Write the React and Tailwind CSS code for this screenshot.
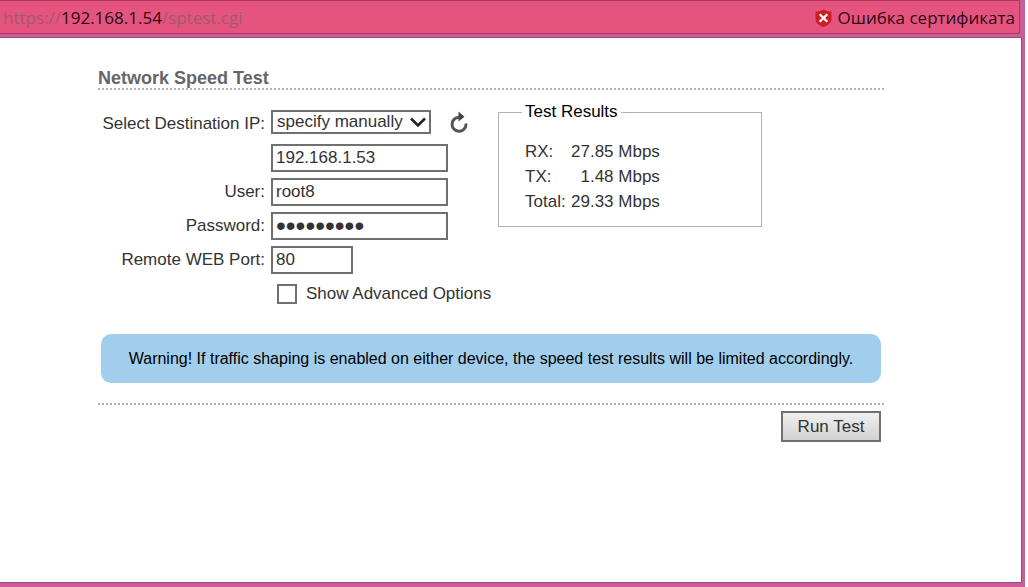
import { useState } from "react";

const results = [
  { label: "RX:", value: "27.85" },
  { label: "TX:", value: "1.48" },
  { label: "Total:", value: "29.33" },
];

const inputClass = "h-7 border-2 border-[#707070] bg-white px-[3px] outline-none";

function ShieldIcon() {
  return (
    <svg width="17" height="19" viewBox="0 0 17 19" aria-hidden="true">
      <path
        d="M8.500 .5 C11 2 13.500 2.600 16.500 2.600 V10 C16.500 14 12.500 16.500 8.500 18.300 C4.500 16.500 .5 14 .5 10 V2.600 C3.500 2.600 6 2 8.500 .5Z"
        fill="#cf1d25"
      />
      <path d="M4.700 5.200 L12.300 12.800 M12.300 5.200 L4.700 12.800" stroke="#fff" strokeWidth="2.200" />
    </svg>
  );
}

function ReloadIcon() {
  return (
    <svg width="20" height="24" viewBox="0 0 20 24" aria-hidden="true">
      <path d="M10 7.200 A7 7 0 1 0 17 13.500" fill="none" stroke="#555" strokeWidth="3" />
      <path d="M9.500 1.500 L15.500 6.800 L9.500 11.400Z" fill="#444" />
    </svg>
  );
}

function AddressBar() {
  return (
    <header className="mr-[5px] flex h-[34px] items-center justify-between border border-l-0 border-[#ab3560] bg-[#e5547f] pl-[3px] pr-1 font-['Open_Sans','Noto_Sans',sans-serif] text-[17px] text-[#2b0a14]">
      <p className="pt-[2px] text-[#a05a6c]">
        https://<span className="text-[#2b0a14]">192.168.1.54</span>/sptest.cgi
      </p>
      <p className="flex items-center gap-[6px] pt-[2px]">
        <ShieldIcon />
        Ошибка сертификата
      </p>
    </header>
  );
}

function SpeedTestForm() {
  const [advanced, setAdvanced] = useState(false);

  return (
    <div className="grid grid-cols-[167px_auto] items-center justify-items-start gap-[6px]">
      <label htmlFor="destination" className="justify-self-end">
        Select Destination IP:
      </label>
      <div className="flex h-7 items-start gap-[18px]">
        <div className="relative">
          <select
            id="destination"
            className="block h-6 w-40 appearance-none border-2 border-[#707070] bg-white pl-1 leading-5 outline-none"
          >
            <option>specify manually</option>
          </select>
          <svg
            className="pointer-events-none absolute right-[5px] top-[7px]"
            width="16"
            height="11"
            viewBox="0 0 16 11"
            aria-hidden="true"
          >
            <path d="M1 1.500 L8 8.500 L15 1.500" fill="none" stroke="#222" strokeWidth="2.600" />
          </svg>
        </div>
        <button type="button" aria-label="Refresh">
          <ReloadIcon />
        </button>
      </div>

      <input
        aria-label="Destination IP"
        className={`col-start-2 w-[177px] ${inputClass}`}
        defaultValue="192.168.1.53"
      />

      <label htmlFor="user" className="justify-self-end">
        User:
      </label>
      <input id="user" className={`w-[177px] ${inputClass}`} defaultValue="root8" />

      <label htmlFor="password" className="justify-self-end">
        Password:
      </label>
      <input
        id="password"
        type="password"
        className={`w-[177px] text-[28px] leading-6 ${inputClass}`}
        defaultValue="ubntubnt1"
      />

      <label htmlFor="port" className="justify-self-end">
        Remote WEB Port:
      </label>
      <input id="port" className={`w-[82px] ${inputClass}`} defaultValue="80" />

      <label className="col-start-2 flex h-7 items-center gap-[9px] pl-[6px]">
        <input
          type="checkbox"
          checked={advanced}
          onChange={(e) => setAdvanced(e.target.checked)}
          className="size-5 appearance-none border-2 border-[#707070] bg-white checked:bg-[#707070]"
        />
        Show Advanced Options
      </label>
    </div>
  );
}

function TestResults() {
  return (
    <fieldset className="w-[264px] border border-[#b0b0b0] pb-3 pl-[23px]">
      <legend className="px-[3px] leading-5 text-black">Test Results</legend>
      <table className="ml-[3px] mt-[17px]">
        <tbody>
          {results.map((row) => (
            <tr key={row.label} className="h-[25px]">
              <th className="w-[46px] text-left font-normal">{row.label}</th>
              <td className="text-right">{row.value} Mbps</td>
            </tr>
          ))}
        </tbody>
      </table>
    </fieldset>
  );
}

export default function App() {
  return (
    <div className="flex min-h-screen flex-col bg-white pr-[3px]">
      <div className="flex grow flex-col bg-[#c85f9b] pb-1">
        <AddressBar />
        <main className="mr-[3px] mt-[3px] grow border border-l-0 border-[#a8437c] bg-white pl-[98px] font-['Liberation_Sans',Arial,sans-serif] text-[17px] leading-6 text-[#333]">
          <div className="max-w-[786px] pt-[30px]">
            <h1 className="border-b-2 border-dotted border-[#b0b0b0] text-lg leading-5 font-bold text-[#666]">
              Network Speed Test
            </h1>

            <div className="flex items-start justify-between pt-3 pr-[122px]">
              <div className="pt-2">
                <SpeedTestForm />
              </div>
              <TestResults />
            </div>

            <p className="mx-[3px] mt-[26px] rounded-[10px] bg-[#a0ceec] px-[15px] py-3 text-center text-base leading-[25px] text-black">
              Warning! If traffic shaping is enabled on either device, the speed test results will be
              limited accordingly.
            </p>

            <div className="mt-5 flex justify-end border-t-2 border-dotted border-[#b0b0b0] pt-[6px] pr-[3px]">
              <button
                type="button"
                className="h-[31px] w-[100px] border-2 border-[#707070] bg-linear-to-b from-[#efefef] to-[#d2d2d2] leading-5"
              >
                Run Test
              </button>
            </div>
          </div>
        </main>
      </div>
    </div>
  );
}
